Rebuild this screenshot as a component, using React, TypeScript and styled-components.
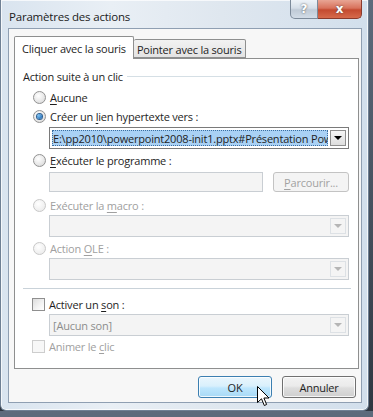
import styled, { createGlobalStyle } from "styled-components";

const GlobalStyle = createGlobalStyle`
  html, body {
    margin: 0;
    padding: 0;
    background: linear-gradient(180deg, #5d6b7c 0%, #2f3741 100%);
    font-family: "Open Sans", "Noto Sans", sans-serif;
    letter-spacing: -0.2px;
  }
`;

const Window = styled.div`
  position: relative;
  width: 369px;
  height: 411px;
  box-sizing: border-box;
  padding: 0 6px 7px 7px;
  display: flex;
  flex-direction: column;
  border-radius: 0 0 6px 6px;
  border: 1px solid #6f8094;
  border-top: none;
  background: linear-gradient(
    90deg,
    #d9e4ef 0%,
    #e9eff5 30%,
    #dfe7ef 60%,
    #d2dfec 100%
  );
  box-shadow: inset 0 0 0 1px rgba(255, 255, 255, 0.7);
`;

const TitleBar = styled.div`
  height: 28px;
  display: flex;
  align-items: flex-start;
  justify-content: space-between;
`;

const Title = styled.span`
  margin: 9px 0 0 1px;
  font-size: 11.5px;
  color: #1b1b1b;
  line-height: 16px;
`;

const CaptionButtons = styled.div`
  display: flex;
`;

const CaptionButton = styled.div<{ $close?: boolean }>`
  width: ${(p) => (p.$close ? "44px" : "28px")};
  height: 19px;
  box-sizing: border-box;
  display: flex;
  align-items: center;
  justify-content: center;
  border: 1px solid ${(p) => (p.$close ? "#8a3a2c" : "#7c8a9a")};
  border-top: none;
  border-left-width: ${(p) => (p.$close ? "0" : "1px")};
  border-radius: ${(p) => (p.$close ? "0 0 5px 0" : "0 0 0 5px")};
  background: ${(p) =>
    p.$close
      ? "linear-gradient(180deg, #e8a594 0%, #d8725c 45%, #c44a30 55%, #d66a4c 100%)"
      : "linear-gradient(180deg, #eef3f8 0%, #d5dee8 45%, #bfcad6 55%, #d2dce7 100%)"};
  color: #fff;
  font-family: "DejaVu Sans", sans-serif;
  font-weight: bold;
  font-size: 12px;
  text-shadow: 0 0 2px #444;
`;

const Client = styled.div`
  flex: 1;
  display: flex;
  flex-direction: column;
  background: #f7f7f7;
  border: 1px solid #8f9fb2;
  padding: 6px 5px 0 5px;
`;

const TabStrip = styled.div`
  display: flex;
  align-items: flex-end;
  height: 23px;
  position: relative;
  z-index: 1;
`;

const Tab = styled.div<{ $active?: boolean }>`
  height: ${(p) => (p.$active ? "23px" : "19px")};
  box-sizing: border-box;
  display: flex;
  align-items: center;
  padding: ${(p) => (p.$active ? "0 7px 0 7px" : "2px 4px 0 3px")};
  border: 1px solid #8e8f8f;
  border-bottom: ${(p) => (p.$active ? "none" : "1px solid #8e8f8f")};
  border-left-width: ${(p) => (p.$active ? "1px" : "0")};
  border-radius: 2px 2px 0 0;
  background: ${(p) =>
    p.$active ? "#ffffff" : "linear-gradient(180deg, #f2f2f2 0%, #e3e3e3 100%)"};
  font-size: 11px;
  color: #1e1e1e;
  margin-bottom: ${(p) => (p.$active ? "-1px" : "0")};
`;

const Panel = styled.div`
  height: 311px;
  box-sizing: border-box;
  width: 345px;
  border: 1px solid #8e8f8f;
  background: #ffffff;
  padding: 8px 7px 0 8px;
  display: flex;
  flex-direction: column;
`;

const GroupTitle = styled.div`
  height: 18px;
  display: flex;
  align-items: center;
  gap: 4px;
  font-size: 11px;
  color: #1e1e1e;
  &::after {
    content: "";
    flex: 1;
    height: 1px;
    background: #d5dfe5;
  }
`;

const OptionRow = styled.label<{ $top: number; $disabled?: boolean }>`
  margin-top: ${(p) => p.$top}px;
  height: 18px;
  display: flex;
  align-items: center;
  gap: 4px;
  padding-left: 10px;
  font-size: 11px;
  color: ${(p) => (p.$disabled ? "#a0a0a0" : "#1e1e1e")};
`;

const Radio = styled.span<{ $checked?: boolean; $disabled?: boolean }>`
  width: 13px;
  height: 13px;
  box-sizing: border-box;
  border-radius: 50%;
  border: 1px solid ${(p) => (p.$disabled ? "#c8c8c8" : "#929292")};
  background: ${(p) =>
    p.$disabled
      ? "radial-gradient(circle at 40% 35%, #ffffff 0%, #eeeeee 70%)"
      : "radial-gradient(circle at 40% 35%, #ffffff 0%, #e6e6e6 60%, #cfcfcf 100%)"};
  display: flex;
  align-items: center;
  justify-content: center;
  &::after {
    content: "";
    display: ${(p) => (p.$checked ? "block" : "none")};
    width: 5px;
    height: 5px;
    border-radius: 50%;
    background: radial-gradient(circle at 35% 35%, #7fc4f4 0%, #1f6bb5 80%);
    box-shadow: 0 0 0 1px #2d5f91;
  }
`;

const Check = styled.span<{ $disabled?: boolean }>`
  width: 13px;
  height: 13px;
  box-sizing: border-box;
  margin-left: -1px;
  border: 1px solid ${(p) => (p.$disabled ? "#cdcdcd" : "#8f8f8f")};
  background: ${(p) =>
    p.$disabled
      ? "#f7f7f7"
      : "linear-gradient(135deg, #dcdcdc 0%, #f4f4f4 60%, #ffffff 100%)"};
`;

const U = styled.span`
  text-decoration: underline;
  text-underline-offset: 2px;
`;

const Combo = styled.div<{ $top: number; $disabled?: boolean }>`
  margin: ${(p) => p.$top}px 0 0 26px;
  width: 300px;
  height: 22px;
  box-sizing: border-box;
  display: flex;
  align-items: stretch;
  padding: 2px;
  border: 1px solid ${(p) => (p.$disabled ? "#c9ced3" : "#7a7a7a")};
  background: ${(p) => (p.$disabled ? "#f4f4f4" : "#ffffff")};
`;

const ComboText = styled.div<{ $selected?: boolean; $muted?: boolean }>`
  flex: 1;
  min-width: 0;
  overflow: hidden;
  white-space: nowrap;
  display: flex;
  align-items: center;
  padding-left: 1px;
  font-size: 11px;
  color: ${(p) => (p.$muted ? "#8d8d8d" : "#1e1e1e")};
  background: ${(p) => (p.$selected ? "#a9d1f5" : "transparent")};
  outline: ${(p) => (p.$selected ? "1px dotted #3b6ea0" : "none")};
  outline-offset: -1px;
`;

const DropButton = styled.div<{ $disabled?: boolean }>`
  width: 16px;
  margin-left: 2px;
  box-sizing: border-box;
  border: 1px solid ${(p) => (p.$disabled ? "#dde1e5" : "#8f8f8f")};
  background: ${(p) =>
    p.$disabled ? "#f4f4f4" : "linear-gradient(180deg, #f6f6f6 0%, #dedede 100%)"};
  display: flex;
  align-items: center;
  justify-content: center;
  &::after {
    content: "";
    border-left: 4px solid transparent;
    border-right: 4px solid transparent;
    border-top: 4px solid ${(p) => (p.$disabled ? "#b5b5b5" : "#000000")};
  }
`;

const InputRow = styled.div`
  margin: 3px 0 0 26px;
  display: flex;
  gap: 10px;
  height: 20px;
`;

const TextBox = styled.div`
  width: 214px;
  box-sizing: border-box;
  border: 1px solid #c9ced3;
  background: #f4f4f4;
`;

const BrowseButton = styled.div`
  width: 76px;
  box-sizing: border-box;
  border: 1px solid #c3c3c3;
  border-radius: 3px;
  background: #f4f4f4;
  display: flex;
  align-items: center;
  justify-content: center;
  font-size: 11px;
  color: #a2a2a2;
`;

const Separator = styled.div`
  margin-top: 8px;
  height: 1px;
  background: #c9d2d9;
`;

const Footer = styled.div`
  flex: 1;
  display: flex;
  justify-content: flex-end;
  align-items: flex-start;
  gap: 10px;
  padding: 7px 0 0 0;
  position: relative;
`;

const DialogButton = styled.div<{ $default?: boolean }>`
  width: 74px;
  height: 22px;
  box-sizing: border-box;
  display: flex;
  align-items: center;
  justify-content: center;
  border-radius: 3px;
  font-size: 11px;
  color: #1e1e1e;
  border: 1px solid ${(p) => (p.$default ? "#3c7fb1" : "#707070")};
  background: ${(p) =>
    p.$default
      ? "linear-gradient(180deg, #eaf6fd 0%, #d9f0fc 45%, #bee6fd 55%, #a7d9f5 100%)"
      : "linear-gradient(180deg, #f2f2f2 0%, #ebebeb 45%, #dddddd 55%, #cfcfcf 100%)"};
  box-shadow: inset 0 0 0 1px rgba(255, 255, 255, 0.8);
`;

const Cursor = styled.svg`
  position: absolute;
  left: 243px;
  top: 17px;
`;

export default function App() {
  return (
    <>
      <GlobalStyle />
      <Window>
        <TitleBar>
          <Title>Paramètres des actions</Title>
          <CaptionButtons>
            <CaptionButton>?</CaptionButton>
            <CaptionButton $close>x</CaptionButton>
          </CaptionButtons>
        </TitleBar>
        <Client>
          <TabStrip>
            <Tab $active>Cliquer avec la souris</Tab>
            <Tab>Pointer avec la souris</Tab>
          </TabStrip>
          <Panel>
            <GroupTitle>Action suite à un clic</GroupTitle>
            <OptionRow $top={3}>
              <Radio />
              <span>
                <U>A</U>ucune
              </span>
            </OptionRow>
            <OptionRow $top={1}>
              <Radio $checked />
              <span>
                Créer un <U>l</U>ien hypertexte vers :
              </span>
            </OptionRow>
            <Combo $top={2}>
              <ComboText $selected>
                E:\pp2010\powerpoint2008-init1.pptx#Présentation PowerPoint
              </ComboText>
              <DropButton />
            </Combo>
            <OptionRow $top={2}>
              <Radio />
              <span>
                <U>E</U>xécuter le programme :
              </span>
            </OptionRow>
            <InputRow>
              <TextBox />
              <BrowseButton>
                <span>
                  <U>P</U>arcourir...
                </span>
              </BrowseButton>
            </InputRow>
            <OptionRow $top={4} $disabled>
              <Radio $disabled />
              <span>
                Exécuter la <U>m</U>acro :
              </span>
            </OptionRow>
            <Combo $top={1} $disabled>
              <ComboText />
              <DropButton $disabled />
            </Combo>
            <OptionRow $top={2} $disabled>
              <Radio $disabled />
              <span>
                Action <U>O</U>LE :
              </span>
            </OptionRow>
            <Combo $top={1} $disabled>
              <ComboText />
              <DropButton $disabled />
            </Combo>
            <Separator />
            <OptionRow $top={6}>
              <Check />
              <span>
                Activer un <U>s</U>on :
              </span>
            </OptionRow>
            <Combo $top={1} $disabled>
              <ComboText $muted>[Aucun son]</ComboText>
              <DropButton $disabled />
            </Combo>
            <OptionRow $top={1} $disabled>
              <Check $disabled />
              <span>
                Animer le <U>c</U>lic
              </span>
            </OptionRow>
          </Panel>
          <Footer>
            <DialogButton $default>OK</DialogButton>
            <DialogButton>Annuler</DialogButton>
            <Cursor width="13" height="21" viewBox="0 0 13 21">
              <path
                d="M0.5 0.5 L0.5 16.5 L4.5 12.8 L7.3 19.5 L9.6 18.5 L6.9 12 L12 12 Z"
                fill="#ffffff"
                stroke="#000000"
                strokeWidth="1"
                strokeLinejoin="round"
              />
            </Cursor>
          </Footer>
        </Client>
      </Window>
    </>
  );
}
